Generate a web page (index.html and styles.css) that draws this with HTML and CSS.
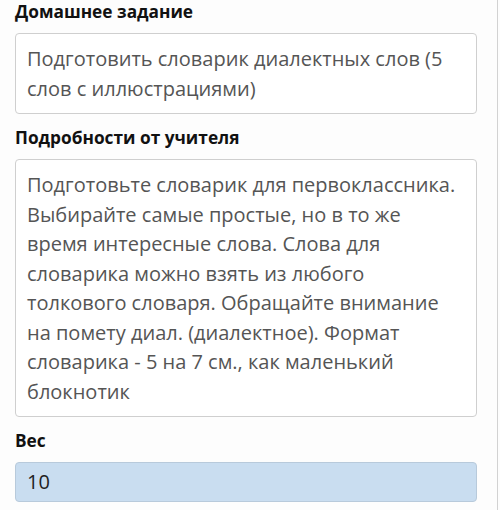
FILE: index.html
```html
<!DOCTYPE html>
<html lang="ru">
<head>
    <meta charset="UTF-8">
    <meta name="viewport" content="width=device-width, initial-scale=1.0">
    <title>Домашнее задание</title>
    <link rel="stylesheet" href="styles.css">
</head>
<body>

    <div class="task">
        <h3 class="label">Домашнее задание</h3>
        <div class="field">Подготовить словарик диалектных слов (5 слов с иллюстрациями)</div>

        <h3 class="label">Подробности от учителя</h3>
        <div class="field">Подготовьте словарик для первоклассника. Выбирайте самые простые, но в то же время интересные слова. Слова для словарика можно взять из любого толкового словаря. Обращайте внимание на помету диал. (диалектное). Формат словарика - 5 на 7 см., как маленький блокнотик</div>

        <h3 class="label">Вес</h3>
        <div class="field field-weight">10</div>
    </div>

</body>
</html>
```
FILE: styles.css
```css
body {
    margin: 0;
    font-family: "Open Sans", Arial, sans-serif;
    background-color: #fdfdfd;
}
.task {
    width: 498px;
    padding: 0 20px 8px 15px;
    border-right: 1px solid #d2d2d2;
    box-sizing: border-box;
}
.label {
    margin: 0 0 9px;
    font-size: 17.3px;
    line-height: 24px;
    font-weight: 700;
    color: #111;
}
.field {
    background-color: #fff;
    border: 1px solid #cfcfcf;
    border-radius: 4px;
    padding: 10px 11px;
    font-size: 20px;
    line-height: 29.5px;
    color: #555;
    margin-bottom: 12px;
}
.field-weight {
    background-color: #c9ddf0;
    border-color: #b8cadb;
    padding: 4px 11px;
    color: #222;
}
```
